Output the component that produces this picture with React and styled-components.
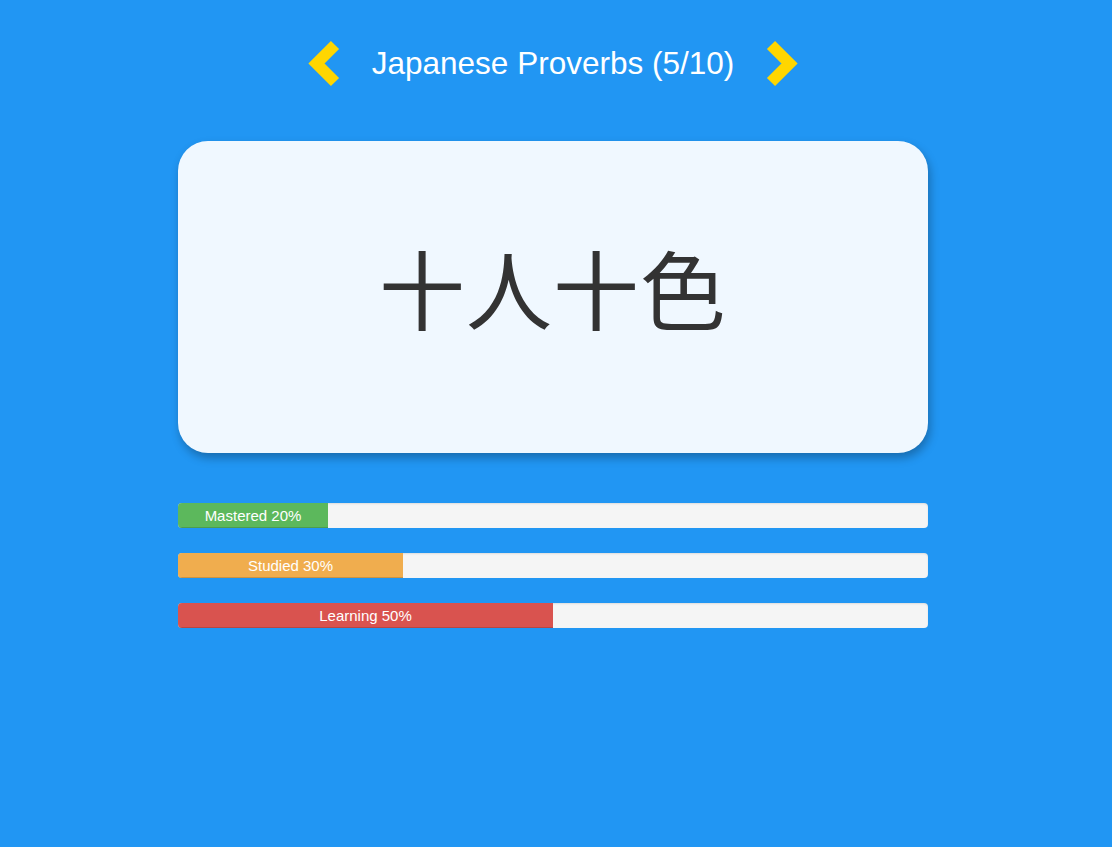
import React from "react";
import styled, { createGlobalStyle } from "styled-components";

const GlobalStyle = createGlobalStyle`
  html, body {
    margin: 0;
    padding: 0;
    background: #2196f3;
    min-height: 100%;
  }
  body {
    font-family: "Liberation Sans", Arial, sans-serif;
  }
`;

const Page = styled.div`
  min-height: 847px;
  background: #2196f3;
  display: flex;
  flex-direction: column;
  align-items: center;
  padding: 40px 6px 0 0;
  box-sizing: border-box;
`;

const Header = styled.div`
  display: flex;
  align-items: center;
  justify-content: center;
  gap: 32px;
  height: 50px;
`;

const Title = styled.h1`
  margin: 0 0 4px;
  color: #ffffff;
  font-size: 31.5px;
  font-weight: 400;
  line-height: 44px;
`;

const ArrowButton = styled.button`
  border: none;
  background: none;
  padding: 0;
  width: 34px;
  height: 50px;
  display: flex;
  cursor: pointer;
`;

const Card = styled.div`
  margin-top: 51px;
  width: 750px;
  height: 312px;
  border-radius: 30px;
  background: #f0f8ff;
  box-shadow: 2px 5px 10px rgba(0, 0, 0, 0.28);
  display: flex;
  align-items: center;
  justify-content: center;
`;

const Phrase = styled.div`
  font-family: "Noto Sans CJK JP", "Noto Sans CJK SC", serif;
  font-size: 86px;
  color: #333333;
  letter-spacing: 1px;
  margin-top: -22px;
`;

const Bars = styled.div`
  margin-top: 50px;
  width: 750px;
  display: flex;
  flex-direction: column;
  gap: 25px;
`;

const Track = styled.div`
  height: 25px;
  border-radius: 4px;
  background: #f5f5f5;
  box-shadow: inset 0 1px 2px rgba(0, 0, 0, 0.1);
  overflow: hidden;
  display: flex;
`;

const Fill = styled.div`
  background: ${({ color }) => color};
  color: #ffffff;
  font-size: 15px;
  line-height: 25px;
  text-align: center;
  box-shadow: inset 0 -1px 0 rgba(0, 0, 0, 0.15);
  white-space: nowrap;
`;

function Chevron({ dir }) {
  const pts = dir === "left" ? "29,5 10.5,23.5 29,42" : "5,5 23.5,23.5 5,42";
  return (
    <svg width="34" height="50" viewBox="0 0 34 50">
      <polyline
        points={pts}
        fill="none"
        stroke="#ffd600"
        strokeWidth="11.5"
        strokeLinejoin="miter"
        strokeLinecap="butt"
      />
    </svg>
  );
}

const STATS = [
  { label: "Mastered", value: 20, color: "#5cb85c" },
  { label: "Studied", value: 30, color: "#f0ad4e" },
  { label: "Learning", value: 50, color: "#d9534f" },
];

export default function App() {
  return (
    <>
      <GlobalStyle />
      <Page>
        <Header>
          <ArrowButton aria-label="previous">
            <Chevron dir="left" />
          </ArrowButton>
          <Title>Japanese Proverbs (5/10)</Title>
          <ArrowButton aria-label="next">
            <Chevron dir="right" />
          </ArrowButton>
        </Header>
        <Card>
          <Phrase>十人十色</Phrase>
        </Card>
        <Bars>
          {STATS.map((s) => (
            <Track key={s.label}>
              <Fill color={s.color} style={{ width: `${s.value}%` }}>
                {s.label} {s.value}%
              </Fill>
            </Track>
          ))}
        </Bars>
      </Page>
    </>
  );
}
